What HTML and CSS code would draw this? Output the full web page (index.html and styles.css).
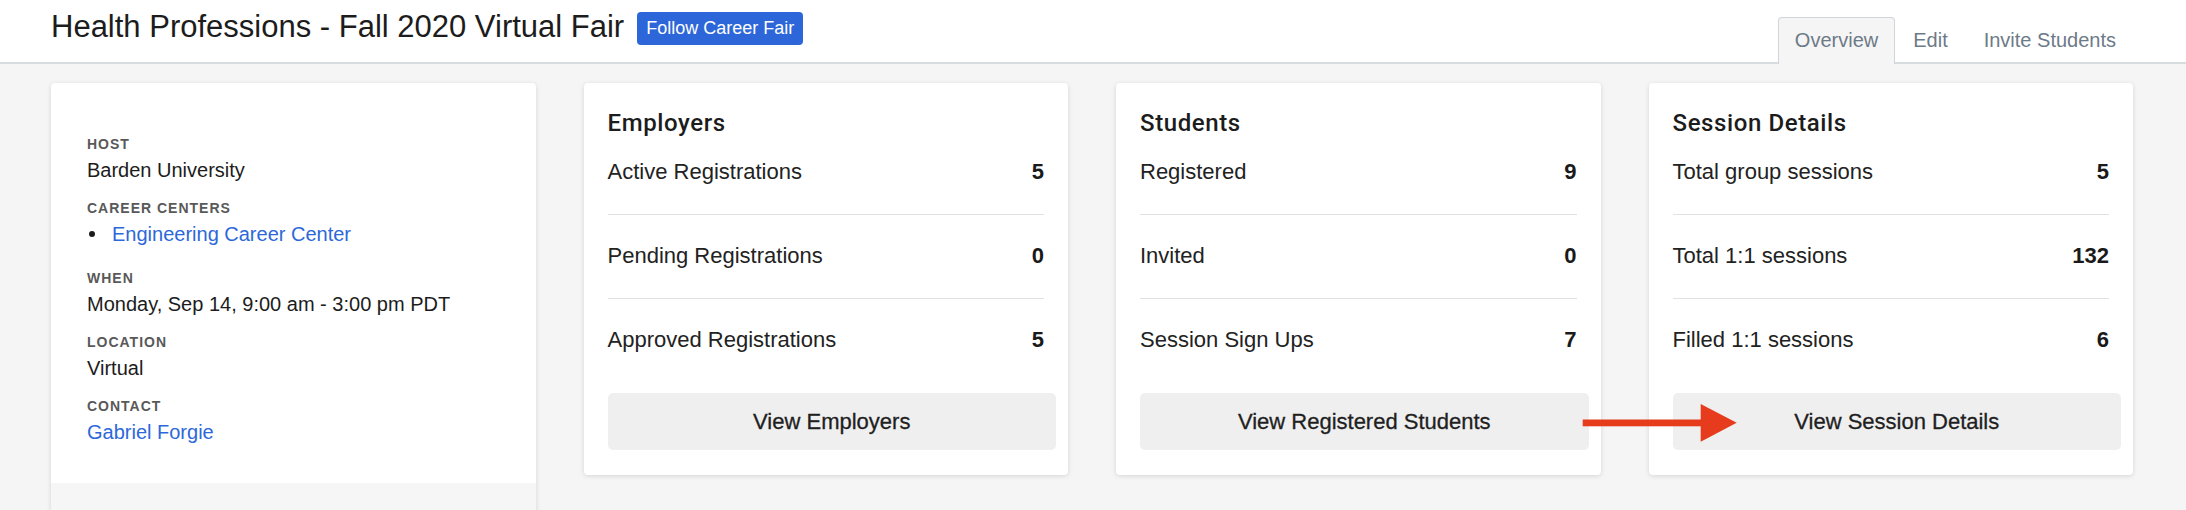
FILE: index.html
```html
<!DOCTYPE html>
<html lang="en">
<head>
<meta charset="utf-8">
<title>Health Professions - Fall 2020 Virtual Fair</title>
<link rel="stylesheet" href="styles.css">
</head>
<body>
<header class="page-header">
  <h1 class="title">Health Professions - Fall 2020 Virtual Fair</h1>
  <button class="follow-btn">Follow Career Fair</button>
  <nav class="tabs">
    <a class="tab tab-active">Overview</a>
    <a class="tab">Edit</a>
    <a class="tab">Invite Students</a>
  </nav>
</header>
<main class="content">
  <section class="card info-card">
    <div class="info-body">
      <div class="field">
        <div class="label">HOST</div>
        <div class="value">Barden University</div>
      </div>
      <div class="field field-list">
        <div class="label">CAREER CENTERS</div>
        <ul class="centers">
          <li><a class="link">Engineering Career Center</a></li>
        </ul>
      </div>
      <div class="field">
        <div class="label">WHEN</div>
        <div class="value">Monday, Sep 14, 9:00 am - 3:00 pm PDT</div>
      </div>
      <div class="field">
        <div class="label">LOCATION</div>
        <div class="value">Virtual</div>
      </div>
      <div class="field">
        <div class="label">CONTACT</div>
        <div class="value"><a class="link">Gabriel Forgie</a></div>
      </div>
    </div>
    <div class="info-foot"></div>
  </section>

  <section class="card stat-card">
    <h2 class="card-title">Employers</h2>
    <div class="rows">
      <div class="row"><span>Active Registrations</span><b>5</b></div>
      <div class="row"><span>Pending Registrations</span><b>0</b></div>
      <div class="row"><span>Approved Registrations</span><b>5</b></div>
    </div>
    <button class="view-btn">View Employers</button>
  </section>

  <section class="card stat-card">
    <h2 class="card-title">Students</h2>
    <div class="rows">
      <div class="row"><span>Registered</span><b>9</b></div>
      <div class="row"><span>Invited</span><b>0</b></div>
      <div class="row"><span>Session Sign Ups</span><b>7</b></div>
    </div>
    <button class="view-btn">View Registered Students</button>
  </section>

  <section class="card stat-card">
    <h2 class="card-title">Session Details</h2>
    <div class="rows">
      <div class="row"><span>Total group sessions</span><b>5</b></div>
      <div class="row"><span>Total 1:1 sessions</span><b>132</b></div>
      <div class="row"><span>Filled 1:1 sessions</span><b>6</b></div>
    </div>
    <button class="view-btn">View Session Details</button>
  </section>
</main>
<svg class="arrow" viewBox="0 0 160 45" width="160" height="45" aria-hidden="true">
  <rect x="2.7" y="19.5" width="120" height="6.8" fill="#e63b1d"/>
  <polygon points="120.7,4 120.7,41.7 156.7,22.7" fill="#e63b1d"/>
</svg>
</body>
</html>
```
FILE: styles.css
```css
html, body {
  margin: 0;
  padding: 0;
  height: 510px;
  overflow: hidden;
}
body {
  position: relative;
  font-family: "Liberation Sans", Arial, Helvetica, sans-serif;
  background: #f5f5f5;
  color: #1f1f1f;
}

/* header */
.page-header {
  display: flex;
  align-items: flex-start;
  height: 62px;
  padding-left: 51px;
  padding-right: 52px;
  background: #ffffff;
  border-bottom: 2px solid #d7dcdf;
}
.title {
  margin: 9px 0 0 0;
  font-size: 31px;
  line-height: 35px;
  font-weight: 400;
  color: #1c1c1c;
}
.follow-btn {
  margin: 12px 0 0 13px;
  height: 33px;
  padding: 0 9px;
  border: none;
  border-radius: 4px;
  background: #2c66d8;
  color: #ffffff;
  font-family: inherit;
  font-size: 18px;
  line-height: 33px;
}
.tabs {
  display: flex;
  margin-left: auto;
  align-self: flex-end;
  margin-bottom: -2px;
}
.tab {
  display: block;
  padding: 11px 17px 12px;
  font-size: 20px;
  line-height: 23px;
  color: #6d7a88;
  border: 1px solid transparent;
  border-bottom: none;
}
.tab-active {
  background: #f5f5f5;
  border-color: #cfd5da;
  border-radius: 4px 4px 0 0;
  padding-left: 16px;
  padding-right: 16px;
}

/* content */
.content {
  display: grid;
  grid-template-columns: repeat(4, 1fr);
  gap: 48px;
  align-items: start;
  padding: 19px 53px 0 51px;
}
.card {
  background: #ffffff;
  border-radius: 4px;
  box-shadow: 0 1px 5px rgba(0, 0, 0, 0.13);
}

/* left info card */
.info-body {
  padding: 52px 36px 39px;
}
.field {
  margin-bottom: 17px;
}
.field:last-child {
  margin-bottom: 0;
}
.field-list {
  margin-bottom: 23px;
}
.label {
  font-size: 14px;
  line-height: 18px;
  font-weight: 700;
  letter-spacing: 1px;
  color: #595959;
  margin-bottom: 5px;
}
.value {
  font-size: 20px;
  line-height: 24px;
  color: #1c1c1c;
}
.link {
  color: #2c68d9;
  text-decoration: none;
}
.centers {
  list-style: none;
  margin: 0;
  padding: 0;
}
.centers li {
  display: flex;
  align-items: center;
  font-size: 20px;
  line-height: 24px;
}
.centers li::before {
  content: "";
  width: 6px;
  height: 6px;
  border-radius: 50%;
  background: #1c1c1c;
  margin-left: 2px;
  margin-right: 17px;
}
.info-foot {
  height: 40px;
  background: #f6f6f6;
  border-radius: 0 0 4px 4px;
}

/* stat cards */
.stat-card {
  padding: 26px 12px 25px 24px;
}
.card-title {
  margin: 0;
  font-family: Roboto, "Liberation Sans", Arial, sans-serif;
  font-size: 24px;
  line-height: 28px;
  font-weight: 500;
  letter-spacing: 0.6px;
  color: #1c1c1c;
}
.rows {
  margin-right: 12px;
}
.row {
  display: flex;
  justify-content: space-between;
  padding: 26px 0 27px;
  font-size: 22px;
  line-height: 30px;
  color: #222222;
  border-bottom: 1px solid #e2e2e2;
}
.row:first-child {
  padding-top: 20px;
}
.row:last-child {
  border-bottom: none;
}
.row b {
  font-weight: 700;
  color: #1a1a1a;
}
.view-btn {
  display: block;
  width: 100%;
  height: 57px;
  margin-top: 11px;
  border: none;
  border-radius: 5px;
  background: #efefef;
  font-family: inherit;
  font-size: 22px;
  color: #1f1f1f;
  -webkit-text-stroke: 0.3px #1f1f1f;
}

/* annotation arrow */
.arrow {
  position: absolute;
  left: 1580px;
  top: 400px;
}
```
